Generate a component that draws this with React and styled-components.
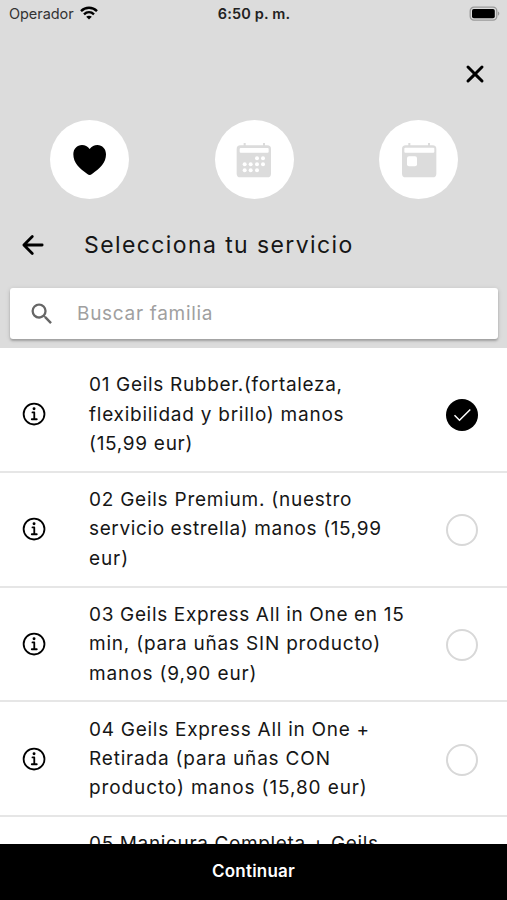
import React, { useState } from "react";
import styled, { createGlobalStyle } from "styled-components";
import {
  IoArrowBack,
  IoClose,
  IoInformationCircleOutline,
} from "react-icons/io5";
import { MdSearch } from "react-icons/md";

const GlobalStyle = createGlobalStyle`
  *, *::before, *::after { box-sizing: border-box; }
  body { margin: 0; background: #fff; overflow: hidden; }
  button { border: 0; padding: 0; margin: 0; background: none; color: inherit; font: inherit; }
  svg { display: block; }
`;

const Screen = styled.main`
  display: flex;
  flex-direction: column;
  width: 100%;
  height: 900px;
  overflow: hidden;
  background: #fff;
  color: #161616;
  font-family: Inter, "Liberation Sans", sans-serif;
`;

const Header = styled.header`
  flex: none;
  height: 348px;
  background: #dcdcdc;
`;

const StatusBar = styled.div`
  display: grid;
  grid-template-columns: 1fr auto 1fr;
  align-items: center;
  height: 28px;
  padding: 0 8px 0 9px;
  font-size: 14.5px;
  line-height: 28px;
`;

const Carrier = styled.div`
  display: flex;
  align-items: center;
  gap: 6px;
  color: #333;
  letter-spacing: -0.05px;
`;

const Wifi = styled.svg`
  width: 18px;
  height: 14px;
  margin-top: -2px;
`;

const Clock = styled.time`
  font-weight: 600;
  color: #222;
  letter-spacing: 0.15px;
`;

const Battery = styled.svg`
  justify-self: end;
  width: 31px;
  height: 15px;
  margin-right: -1px;
  margin-top: -2px;
`;

const CloseRow = styled.div`
  display: flex;
  justify-content: flex-end;
  padding: 30px 16px 0 0;
`;

const IconButton = styled.button`
  display: grid;
  place-items: center;
  color: #000;
`;

const Steps = styled.nav`
  display: flex;
  justify-content: space-between;
  padding: 30px 49px 0 50px;
`;

const Step = styled.button`
  display: grid;
  place-items: center;
  width: 79px;
  height: 79px;
  border-radius: 50%;
  background: #fff;
  color: ${(p) => (p.$active ? "#000" : "#dcdcdc")};
`;

const StepGlyph = styled.svg`
  width: 40px;
  height: 40px;
`;

const TitleRow = styled.div`
  display: flex;
  align-items: center;
  gap: 36px;
  height: 60px;
  padding: 0 18px;
  margin-top: 16px;
`;

const Title = styled.h1`
  margin: 0;
  font-size: 23px;
  font-weight: 400;
  line-height: 30px;
  letter-spacing: 1.4px;
  white-space: nowrap;
`;

const SearchBar = styled.label`
  display: flex;
  align-items: center;
  gap: 21px;
  height: 51px;
  margin: 13px 9px 0 10px;
  padding: 0 18px;
  border-radius: 3px;
  background: #fff;
  color: #666;
  box-shadow: 0 2px 2px rgba(0, 0, 0, 0.2), 0 1px 5px rgba(0, 0, 0, 0.14);
`;

const SearchInput = styled.input`
  flex: 1;
  min-width: 0;
  padding: 0;
  border: 0;
  outline: 0;
  background: none;
  color: #161616;
  font: 400 19px Inter, "Liberation Sans", sans-serif;
  letter-spacing: 0.7px;

  &::placeholder {
    color: #a0a0a0;
    opacity: 1;
  }
`;

const ServiceList = styled.ul`
  flex: 1;
  min-height: 0;
  margin: 0;
  padding: 10px 0 0;
  overflow: hidden;
  list-style: none;
`;

const ServiceRow = styled.li`
  display: grid;
  grid-template-columns: 29px 1fr 32px;
  align-items: center;
  height: 114.8px;
  padding: 0 29.5px 0 20px;
  border-bottom: 2px solid #e6e6e6;
  column-gap: 40px;
`;

const InfoMark = styled.span`
  padding-top: 1px;
  color: #000;
`;

const ServiceName = styled.div`
  min-height: 88.2px;
  font-size: 19px;
  line-height: 29.4px;
  white-space: nowrap;
`;

const NameLine = styled.div`
  letter-spacing: ${(p) => p.$tracking}px;
`;

const Radio = styled.button`
  display: grid;
  place-items: center;
  width: 32px;
  height: 32px;
  && {
    margin-top: 2px;
    border: ${(p) => (p.$checked ? "0" : "2px solid #d8d8d8")};
    background: ${(p) => (p.$checked ? "#000" : "#fff")};
  }
  border-radius: 50%;
`;

const ContinueButton = styled.button`
  && {
    flex: none;
    height: 56px;
    background: #000;
    color: #fff;
    font-size: 17px;
    font-weight: 600;
    letter-spacing: 0.2px;
    padding-bottom: 2px;
  }
`;

const SERVICES = [
  [
    ["01 Geils Rubber.(fortaleza,", 0.68],
    ["flexibilidad y brillo) manos", 0.75],
    ["(15,99 eur)", 0.7],
  ],
  [
    ["02 Geils Premium. (nuestro", 0.75],
    ["servicio estrella) manos (15,99", 0.62],
    ["eur)", 0.9],
  ],
  [
    ["03 Geils Express All in One en 15", 0.66],
    ["min, (para uñas SIN producto)", 0.79],
    ["manos (9,90 eur)", 0.87],
  ],
  [
    ["04 Geils Express All in One +", 0.73],
    ["Retirada (para uñas CON", 0.81],
    ["producto) manos (15,80 eur)", 0.89],
  ],
  [["05 Manicura Completa + Geils", 0.64]],
];

function WifiIcon() {
  return (
    <Wifi viewBox="0 0 18 14" fill="none" stroke="#000" strokeWidth="2.4">
      <path d="M1 5.1C5.5.7 12.5.7 17 5.1" />
      <path d="M4 8.3c2.9-2.7 7.1-2.7 10 0" />
      <path d="M9 13.6 6.2 10.8c1.6-1.5 4-1.5 5.6 0Z" fill="#000" stroke="none" />
    </Wifi>
  );
}

function BatteryIcon() {
  return (
    <Battery viewBox="0 0 31 15">
      <rect x="1.2" y="1.1" width="26.6" height="13" rx="3.8" fill="#dcdcdc" stroke="#999" strokeWidth="1.3" />
      <rect x="3" y="3" width="22.8" height="9.3" rx="1.8" fill="#000" />
      <path d="M29 5.5c1.8.6 1.8 3.6 0 4.2Z" fill="#999" />
    </Battery>
  );
}

function HeartIcon() {
  return (
    <StepGlyph viewBox="0 0 120 120" fill="currentColor">
      <path d="M59 27C53 19 45 15 36 15 21 15 10 27 10 43c0 26 18 42 42 59 5 4 9 4 14 0 24-17 42-33 42-59 0-16-11-28-26-28-9 0-17 4-23 12Z" />
    </StepGlyph>
  );
}

const CALENDAR_DOTS = [
  [69, 55], [87, 55],
  [32, 73], [50, 73], [69, 73], [87, 73],
  [32, 91], [50, 91], [69, 91],
];

function CalendarIcon() {
  return (
    <StepGlyph viewBox="0 0 120 120" fill="currentColor">
      <path d="M32 9v10M90 9v10" stroke="currentColor" strokeWidth="6" />
      <rect x="8" y="16" width="103" height="96" rx="11" />
      <rect x="17" y="24" width="87" height="14" rx="3" fill="#fff" />
      {CALENDAR_DOTS.map(([x, y]) => (
        <circle key={`${x}-${y}`} cx={x} cy={y} r="6" fill="#fff" />
      ))}
    </StepGlyph>
  );
}

function TodayIcon() {
  return (
    <StepGlyph viewBox="0 0 120 120" fill="currentColor">
      <path d="M31 9v10M90 9v10" stroke="currentColor" strokeWidth="6" />
      <rect x="9" y="16" width="103" height="96" rx="11" />
      <rect x="16" y="23" width="90" height="15" rx="3" fill="#fff" />
      <rect x="24" y="49" width="30" height="30" rx="6" fill="#fff" />
    </StepGlyph>
  );
}

function CheckIcon() {
  return (
    <svg width="32" height="32" viewBox="0 0 32 32" fill="none" stroke="#fff" strokeWidth="1.5">
      <path d="m8.5 16.3 5 5L24.3 10.5" />
    </svg>
  );
}

export default function App() {
  const [selected, setSelected] = useState(0);
  return (
    <Screen>
      <GlobalStyle />
      <Header>
        <StatusBar>
          <Carrier>
            Operador
            <WifiIcon />
          </Carrier>
          <Clock>6:50 p. m.</Clock>
          <BatteryIcon />
        </StatusBar>
        <CloseRow>
          <IconButton aria-label="Cerrar">
            <IoClose size={32} />
          </IconButton>
        </CloseRow>
        <Steps>
          <Step $active aria-label="Servicio">
            <HeartIcon />
          </Step>
          <Step aria-label="Calendario">
            <CalendarIcon />
          </Step>
          <Step aria-label="Cita">
            <TodayIcon />
          </Step>
        </Steps>
        <TitleRow>
          <IconButton aria-label="Volver">
            <IoArrowBack size={30} />
          </IconButton>
          <Title>Selecciona tu servicio</Title>
        </TitleRow>
        <SearchBar>
          <MdSearch size={28} />
          <SearchInput placeholder="Buscar familia" />
        </SearchBar>
      </Header>
      <ServiceList>
        {SERVICES.map((lines, i) => (
          <ServiceRow key={lines[0][0]}>
            <InfoMark>
              <IoInformationCircleOutline size={29} />
            </InfoMark>
            <ServiceName>
              {lines.map(([text, tracking]) => (
                <NameLine key={text} $tracking={tracking}>
                  {text}
                </NameLine>
              ))}
            </ServiceName>
            <Radio $checked={i === selected} onClick={() => setSelected(i)} aria-label={lines[0][0]}>
              {i === selected && <CheckIcon />}
            </Radio>
          </ServiceRow>
        ))}
      </ServiceList>
      <ContinueButton>Continuar</ContinueButton>
    </Screen>
  );
}
